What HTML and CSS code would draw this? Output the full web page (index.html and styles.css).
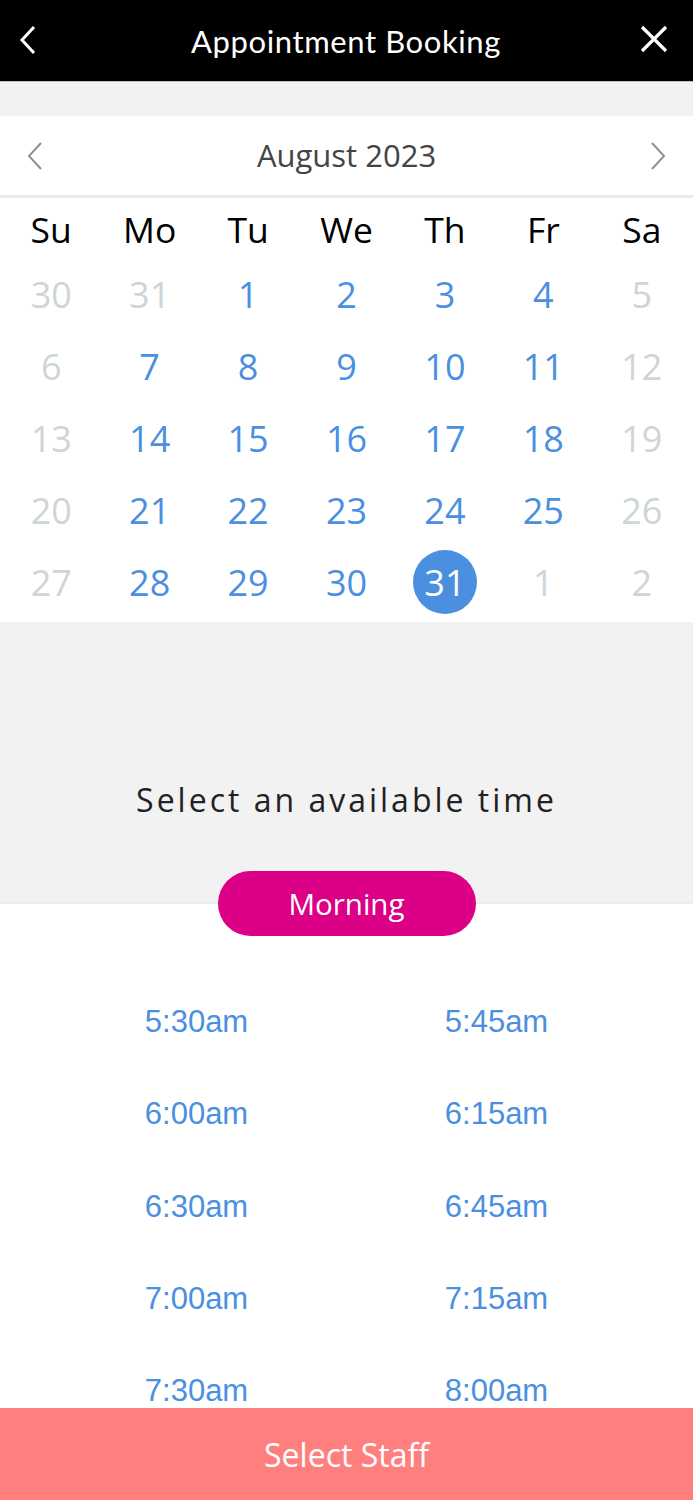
FILE: index.html
```html
<!DOCTYPE html>
<html>
<head>
<meta charset="utf-8">
<link rel="stylesheet" href="styles.css">
</head>
<body>
<div class="app">
  <header class="topbar">
    <svg class="tb-icon back" width="20" height="30" viewBox="0 0 20 30"><path d="M16 2 L4 15 L16 28" fill="none" stroke="#fff" stroke-width="3"/></svg>
    <h1 class="title">Appointment Booking</h1>
    <svg class="tb-icon close" width="28" height="28" viewBox="0 0 28 28"><path d="M2 2 L26 26 M26 2 L2 26" fill="none" stroke="#fff" stroke-width="3.2"/></svg>
  </header>
  <div class="gap"></div>
  <section class="calendar">
    <div class="month-bar">
      <svg class="chev" width="18" height="28" viewBox="0 0 18 28"><path d="M15 1 L3 14 L15 27" fill="none" stroke="#8a9599" stroke-width="2"/></svg>
      <div class="month">August 2023</div>
      <svg class="chev" width="18" height="28" viewBox="0 0 18 28"><path d="M3 1 L15 14 L3 27" fill="none" stroke="#8a9599" stroke-width="2"/></svg>
    </div>
    <div class="grid weekdays">
      <span>Su</span><span>Mo</span><span>Tu</span><span>We</span><span>Th</span><span>Fr</span><span>Sa</span>
    </div>
    <div class="grid days">
      <span class="off">30</span><span class="off">31</span><span>1</span><span>2</span><span>3</span><span>4</span><span class="off">5</span>
      <span class="off">6</span><span>7</span><span>8</span><span>9</span><span>10</span><span>11</span><span class="off">12</span>
      <span class="off">13</span><span>14</span><span>15</span><span>16</span><span>17</span><span>18</span><span class="off">19</span>
      <span class="off">20</span><span>21</span><span>22</span><span>23</span><span>24</span><span>25</span><span class="off">26</span>
      <span class="off">27</span><span>28</span><span>29</span><span>30</span><span class="sel"><b>31</b></span><span class="off">1</span><span class="off">2</span>
    </div>
  </section>
  <section class="time-head">
    <p class="prompt">Select an available time</p>
  </section>
  <section class="times">
    <div class="pill">Morning</div>
    <div class="time-grid">
      <a>5:30am</a><a>5:45am</a>
      <a>6:00am</a><a>6:15am</a>
      <a>6:30am</a><a>6:45am</a>
      <a>7:00am</a><a>7:15am</a>
      <a>7:30am</a><a>8:00am</a>
    </div>
  </section>
  <footer class="cta">Select Staff</footer>
</div>
</body>
</html>
```

FILE: styles.css
```css
html, body {
  margin: 0;
  padding: 0;
}
body {
  font-family: "Open Sans", "Noto Sans", sans-serif;
  background: #fff;
}
.app {
  width: 693px;
  height: 1500px;
  position: relative;
  overflow: hidden;
  background: #fff;
}
.topbar {
  height: 82px;
  background: #000;
  display: grid;
  grid-template-columns: 1fr auto 1fr;
  align-items: center;
  padding: 0 25px 0 18px;
  box-sizing: border-box;
  border-bottom: 1px solid #bdbdbd;
}
.title {
  margin: 0;
  font-family: Lato, "Noto Sans", sans-serif;
  font-weight: 400;
  font-size: 31px;
  color: #fff;
  letter-spacing: 0.6px;
  transform: translateX(3px);
}
.tb-icon.back { margin-top: -2px; justify-self: start; }
.tb-icon.close { margin-top: -4px; justify-self: end; }
.gap {
  height: 34px;
  background: #f2f2f2;
}
.calendar {
  background: #fff;
}
.month-bar {
  height: 79px;
  display: flex;
  align-items: center;
  justify-content: space-between;
  padding: 0 26px;
  border-bottom: 3px solid #e8ecec;
}
.month {
  font-size: 31px;
  color: #444;
  margin-top: -1px;
}
.grid {
  display: grid;
  grid-template-columns: repeat(7, 1fr);
  text-align: center;
  padding: 0 2px;
}
.weekdays span {
  height: 66px;
  line-height: 66px;
  font-size: 35.5px;
  color: #000;
}
.weekdays {
  margin-top: -2px;
  margin-bottom: -4px;
}
.days span {
  height: 72px;
  display: flex;
  align-items: center;
  justify-content: center;
  font-size: 36px;
  color: #4a8fe0;
}
.days span.off {
  color: #cdd5d8;
}
.days span.sel b {
  font-weight: 400;
  width: 64px;
  height: 64px;
  border-radius: 50%;
  background: #4a8fe0;
  color: #fff;
  display: flex;
  align-items: center;
  justify-content: center;
}
.days {
  padding-bottom: 4px;
}
.time-head {
  height: 282px;
  background: #f2f2f2;
  border-bottom: 2px solid #e8eeee;
  display: flex;
  align-items: center;
  justify-content: center;
  box-sizing: border-box;
}
.prompt {
  margin: 0;
  margin-top: 74px;
  font-size: 32px;
  letter-spacing: 3px;
  color: #222;
}
.times {
  background: #fff;
  display: flow-root;
}
.pill {
  width: 258px;
  height: 65px;
  margin: -33px auto 0;
  position: relative;
  background: #dc0087;
  border-radius: 33px;
  color: #fff;
  font-size: 29.5px;
  display: flex;
  align-items: center;
  justify-content: center;
}
.time-grid {
  width: 600px;
  margin: 40px auto 0;
  display: grid;
  grid-template-columns: 1fr 1fr;
  grid-auto-rows: 92.3px;
  text-align: center;
}
.time-grid a {
  font-family: "Liberation Sans", Arial, sans-serif;
  font-size: 31px;
  color: #4a8fe0;
  line-height: 92px;
}
.cta {
  position: absolute;
  left: 0;
  right: 0;
  bottom: 0;
  height: 92px;
  background: #ff7f7f;
  color: #fff;
  font-size: 32px;
  display: flex;
  align-items: center;
  justify-content: center;
}
```
